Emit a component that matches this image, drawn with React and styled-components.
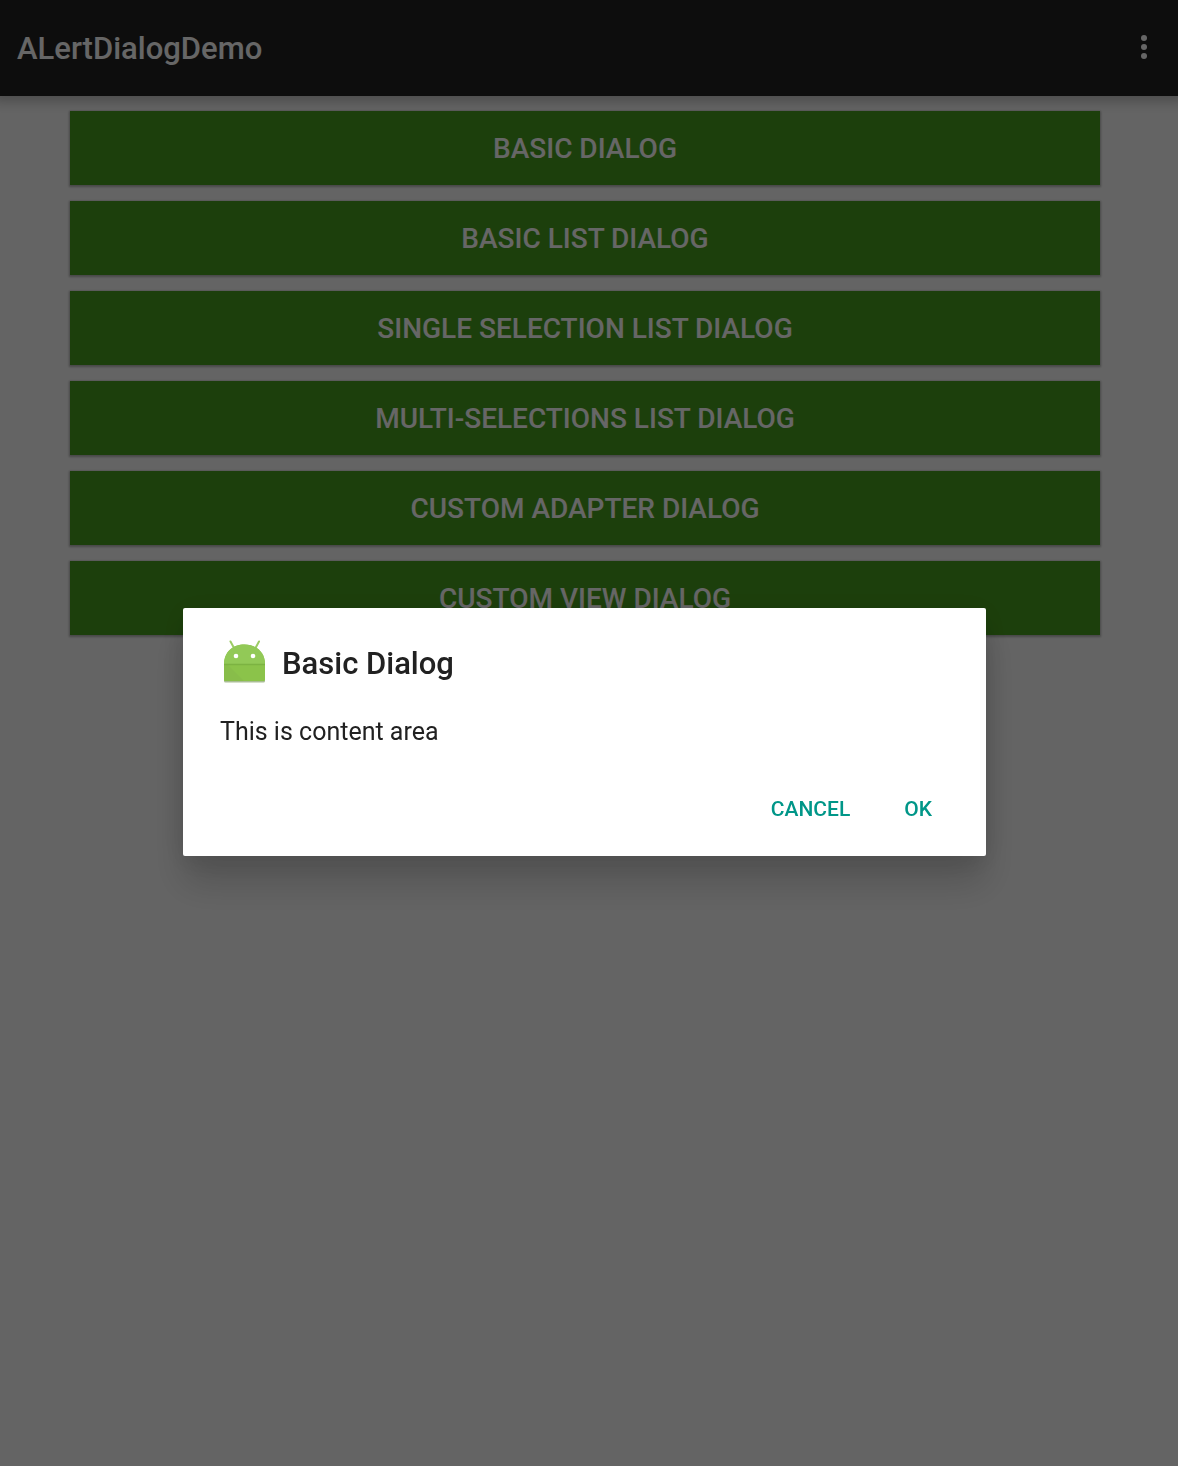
import React from "react";
import styled, { createGlobalStyle } from "styled-components";

const GlobalStyle = createGlobalStyle`
  * {
    box-sizing: border-box;
  }
  body {
    margin: 0;
    background: #fafafa;
    font-family: Roboto, "Noto Sans", sans-serif;
  }
  button {
    border: 0;
    margin: 0;
    padding: 0;
    background: none;
    font-family: inherit;
    cursor: pointer;
  }
`;

const Screen = styled.div`
  min-height: 100vh;
  display: flex;
  flex-direction: column;
`;

const AppBar = styled.header`
  height: 96px;
  padding: 0 18px 0 17px;
  display: flex;
  align-items: center;
  justify-content: space-between;
  background: #212121;
  color: #fff;
  box-shadow: 0 -3px 12px 8px rgba(0, 0, 0, 0.26);
`;

const AppTitle = styled.h1`
  margin: 0;
  padding-top: 2px;
  font-size: 31px;
  line-height: 36px;
  font-weight: 500;
`;

const MenuButton = styled.button`
  width: 32px;
  height: 48px;
  display: flex;
  align-items: center;
  justify-content: center;
  color: #fff;
`;

const Options = styled.main`
  display: flex;
  flex-direction: column;
  gap: 16px;
  padding: 15px 78px 15px 70px;
`;

const OptionButton = styled.button`
  && {
    height: 74px;
    padding-top: 2px;
    background: #489e1e;
    color: #fff;
    font-size: 28px;
    line-height: 32px;
    font-weight: 500;
    text-transform: uppercase;
    box-shadow: 0 1px 2px 1px rgba(0, 0, 0, 0.28);
  }
`;

const Scrim = styled.div`
  position: fixed;
  inset: 0;
  display: flex;
  align-items: center;
  justify-content: center;
  padding: 0 9px 2px 0;
  background: rgba(0, 0, 0, 0.6);
`;

const Dialog = styled.section`
  width: 803px;
  max-width: 90%;
  padding: 32px 38px 19px 37px;
  border-radius: 2px;
  background: #fff;
  color: #212121;
  box-shadow:
    0 28px 36px rgba(0, 0, 0, 0.16),
    0 4px 28px rgba(0, 0, 0, 0.12);
`;

const DialogHeader = styled.div`
  display: flex;
  align-items: center;
  gap: 14px;
`;

const DialogTitle = styled.h2`
  margin: 0;
  font-size: 31px;
  line-height: 48px;
  font-weight: 500;
`;

const DialogText = styled.p`
  margin: 28px 0 33px;
  font-size: 25px;
  line-height: 32px;
`;

const Actions = styled.div`
  display: flex;
  justify-content: flex-end;
  gap: 22px;
`;

const ActionButton = styled.button`
  && {
    height: 56px;
    padding: 0 16px;
    color: #009688;
    font-size: 21px;
    line-height: 24px;
    font-weight: 500;
    text-transform: uppercase;
  }
`;

const MoreIcon = () => (
  <svg width="8" height="28" viewBox="0 0 8 28" fill="currentColor" aria-hidden="true">
    <circle cx="4" cy="4" r="3" />
    <circle cx="4" cy="13" r="3" />
    <circle cx="4" cy="22" r="3" />
  </svg>
);

const AndroidIcon = () => (
  <svg width="48" height="48" viewBox="0 0 48 48" aria-hidden="true">
    <path d="M10.500 1.500 14 8M39 1.500 35.500 8" stroke="#9ccc65" strokeWidth="2" strokeLinecap="round" fill="none" />
    <path d="M4 39h41v2q0 1.500-1.500 1.500h-38Q4 42.500 4 41z" fill="#a9bd94" />
    <path d="M4 24C4 12 13 4.500 24.500 4.500S45 12 45 24v15.500q0 1.500-1.500 1.500h-38Q4 41 4 39.500z" fill="#8bc34a" />
    <path d="M4 24C4 12 13 4.500 24.500 4.500S45 12 45 24z" fill="#92c957" />
    <path d="M8 25 24 41H5.500Q4 41 4 39.500V25z" fill="#88bd4a" />
    <path d="M4 24.500h41" stroke="#7cb342" strokeWidth="1.500" />
    <circle cx="16" cy="16" r="2.300" fill="#fff" />
    <circle cx="33" cy="16" r="2.300" fill="#fff" />
  </svg>
);

const options = [
  "Basic Dialog",
  "Basic List Dialog",
  "Single Selection List Dialog",
  "Multi-Selections List Dialog",
  "Custom Adapter Dialog",
  "Custom View Dialog",
];

export default function App() {
  return (
    <>
      <GlobalStyle />
      <Screen>
        <AppBar>
          <AppTitle>ALertDialogDemo</AppTitle>
          <MenuButton type="button" aria-label="More options">
            <MoreIcon />
          </MenuButton>
        </AppBar>
        <Options>
          {options.map((label) => (
            <OptionButton type="button" key={label}>
              {label}
            </OptionButton>
          ))}
        </Options>
      </Screen>
      <Scrim>
        <Dialog role="dialog" aria-modal="true" aria-labelledby="dialog-title" aria-describedby="dialog-text">
          <DialogHeader>
            <AndroidIcon />
            <DialogTitle id="dialog-title">Basic Dialog</DialogTitle>
          </DialogHeader>
          <DialogText id="dialog-text">This is content area</DialogText>
          <Actions>
            <ActionButton type="button">Cancel</ActionButton>
            <ActionButton type="button">OK</ActionButton>
          </Actions>
        </Dialog>
      </Scrim>
    </>
  );
}
